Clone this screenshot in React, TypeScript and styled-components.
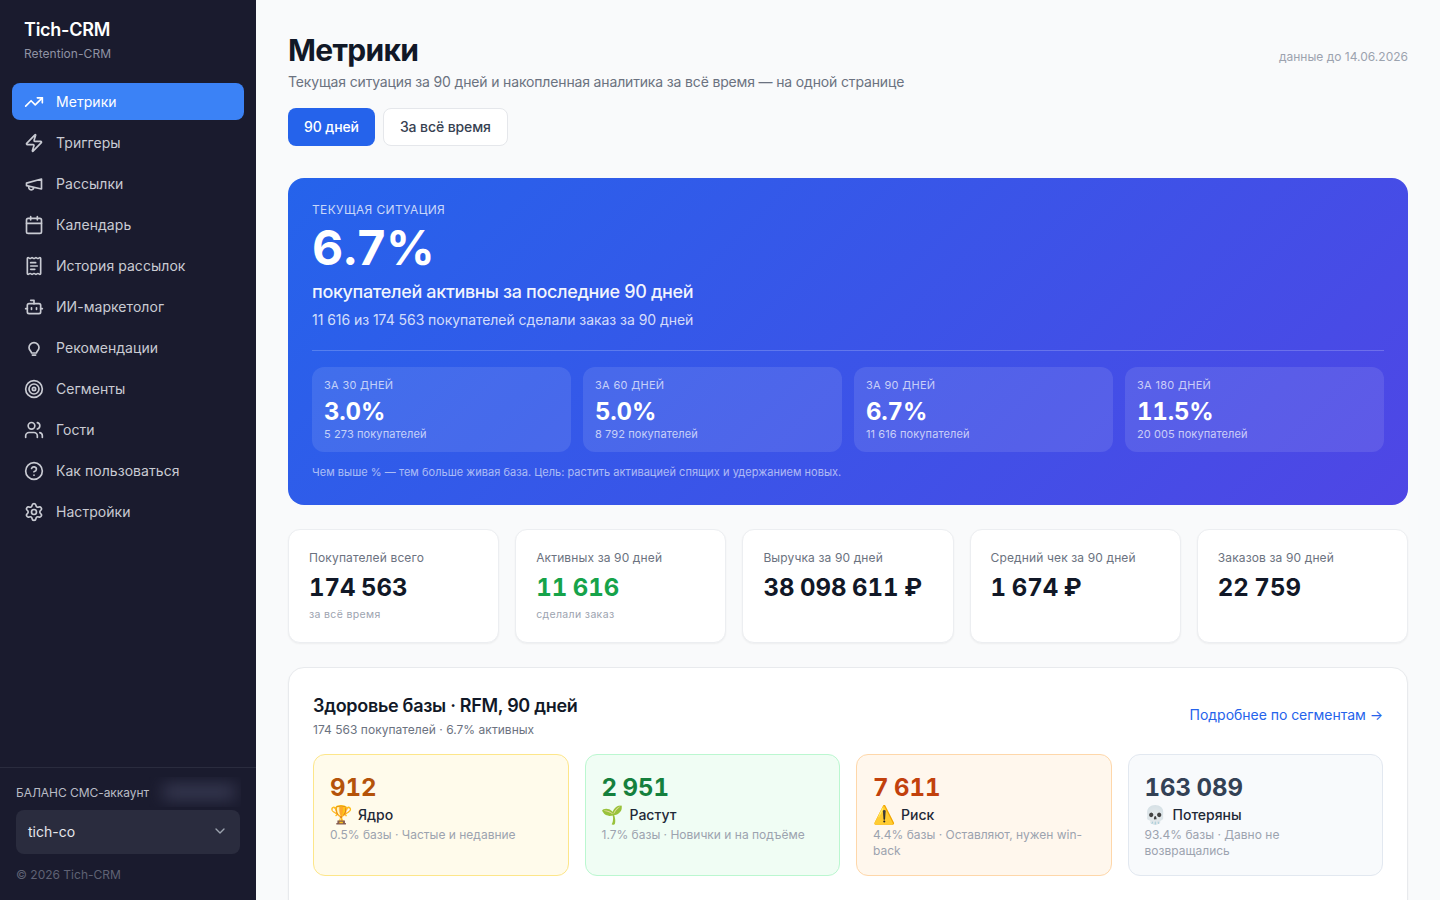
import React from 'react';
import styled, { createGlobalStyle } from 'styled-components';
import {
  TrendingUp, Zap, Calendar, ReceiptText, Bot, Target, Users, CircleHelp, Settings, ChevronDown,
} from 'lucide-react';

const Global = createGlobalStyle`
  html, body { margin: 0; padding: 0; height: 100%; overflow: hidden; }
  body { font-family: Inter, "Noto Sans", sans-serif; background: #f9fafb; color: #111827; }
  * { box-sizing: border-box; }
`;

const Shell = styled.div`display: flex; width: 1440px; height: 900px; overflow: hidden;`;

const Sidebar = styled.aside`
  width: 256px; flex: none; height: 900px; background: #1a1b2e; display: flex; flex-direction: column;
`;
const Brand = styled.div`padding: 20px 24px 0; height: 83px;`;
const BrandName = styled.div`font-size: 18px; font-weight: 600; line-height: 20px; color: #fff; letter-spacing: -0.25px;`;
const BrandSub = styled.div`font-size: 12px; line-height: 16px; color: #8f92a3; margin-top: 6px; letter-spacing: 0.05px;`;
const Nav = styled.nav`display: flex; flex-direction: column; gap: 4px; padding: 0 12px; flex: 1;`;
const NavItem = styled.div<{ $active?: boolean }>`
  height: 37px; display: flex; align-items: center; gap: 12px; padding: 0 12px; border-radius: 8px;
  font-size: 14px; font-weight: 400; letter-spacing: 0.05px; color: ${p => (p.$active ? '#fff' : '#c9cbd3')};
  background: ${p => (p.$active ? '#3b82f6' : 'transparent')};
  svg { width: 20px; height: 20px; flex: none; }
`;
const Foot = styled.div`border-top: 1px solid #2a2c3e; padding: 11px 16px 0; height: 133px;`;
const BalanceRow = styled.div`display: flex; align-items: center; height: 26px; font-size: 12px; color: #b9bbc5; white-space: nowrap; letter-spacing: -0.05px;`;
const Blurred = styled.span`
  display: block; width: 92px; height: 30px; flex: none; position: relative; overflow: hidden;
  &::after { content: ''; position: absolute; left: 14px; top: 8px; width: 72px; height: 14px; background: #3a3c55; filter: blur(8px); }
`;
const Select = styled.div`
  margin-top: 5px; height: 44px; background: #2a2c3e; border-radius: 8px; padding: 0 12px 2px; display: flex;
  align-items: center; justify-content: space-between; color: #e5e7eb; font-size: 14px;
  svg { width: 16px; height: 16px; color: #9ca3af; }
`;
const Copy = styled.div`margin-top: 13px; font-size: 12px; line-height: 16px; color: #5f6274;`;

const Main = styled.main`flex: 1; padding: 32px 32px 0; min-width: 0; overflow: hidden; display: flex; flex-direction: column;`;
const Head = styled.header`display: flex; justify-content: space-between; align-items: flex-start;`;
const Title = styled.h1`margin: 0; font-size: 30px; line-height: 36px; font-weight: 700; color: #111827; letter-spacing: -0.7px;`;
const Sub = styled.p`margin: 4px 0 0; font-size: 14px; line-height: 20px; color: #6b7280; letter-spacing: -0.155px;`;
const DateNote = styled.div`margin-top: 17px; font-size: 12px; line-height: 16px; color: #9ca3af; letter-spacing: 0.01px;`;
const Tabs = styled.div`display: flex; gap: 8px; margin-top: 16px;`;
const Tab = styled.button<{ $active?: boolean }>`
  height: 38px; padding: 0 16px 2px; border-radius: 8px; font: 500 14px Inter, sans-serif; letter-spacing: -0.1px;
  border: ${p => (p.$active ? '0' : '1px solid #e5e7eb')};
  background: ${p => (p.$active ? '#2563eb' : '#fff')}; color: ${p => (p.$active ? '#fff' : '#374151')};
`;
const Hero = styled.section`
  margin-top: 32px; height: 327px; border-radius: 16px; padding: 24px; color: #fff;
  background: linear-gradient(135deg, #2563eb, #4f46e5); display: flex; flex-direction: column; flex: none;
`;
const HeroEyebrow = styled.div`font-size: 12px; line-height: 16px; letter-spacing: 0.35px; color: rgba(255,255,255,0.75);`;
const HeroValue = styled.div`font-size: 48px; line-height: 48px; font-weight: 700; margin-top: 6px; letter-spacing: 0.5px;`;
const HeroLabel = styled.div`font-size: 18px; line-height: 28px; font-weight: 500; margin-top: 6px; color: rgba(255,255,255,0.95); letter-spacing: -0.35px;`;
const HeroNote = styled.div`font-size: 14px; line-height: 20px; margin-top: 4px; color: rgba(255,255,255,0.8); letter-spacing: -0.05px;`;
const HeroRule = styled.hr`width: 100%; border: 0; border-top: 1px solid rgba(255,255,255,0.2); margin: 20px 0 16px;`;
const PeriodGrid = styled.div`display: grid; grid-template-columns: repeat(4, 1fr); gap: 12px;`;
const Period = styled.div`height: 85px; border-radius: 12px; padding: 12px; background: rgba(255,255,255,0.1);`;
const PeriodLabel = styled.div`font-size: 11px; line-height: 12px; letter-spacing: 0.3px; color: rgba(255,255,255,0.7);`;
const PeriodValue = styled.div`font-size: 24px; line-height: 28px; font-weight: 700; margin-top: 7px; font-variant-numeric: tabular-nums; letter-spacing: -0.2px;`;
const PeriodSub = styled.div`font-size: 11px; line-height: 14px; color: rgba(255,255,255,0.7); margin-top: 1px; letter-spacing: 0.1px;`;
const HeroFoot = styled.div`font-size: 11px; line-height: 16px; letter-spacing: 0.03px; color: rgba(255,255,255,0.6); margin-top: 12px;`;

const Stats = styled.section`display: grid; grid-template-columns: repeat(5, 1fr); gap: 16px; margin-top: 24px; flex: none;`;
const Stat = styled.div`height: 114px; background: #fff; border: 1px solid #eceef1; border-radius: 12px; padding: 20px; box-shadow: 0 1px 2px rgba(0,0,0,0.05);`;
const StatLabel = styled.div`font-size: 12px; line-height: 16px; color: #6b7280; letter-spacing: 0.13px;`;
const StatValue = styled.div<{ $green?: boolean }>`font-size: 24px; line-height: 32px; font-weight: 700; margin-top: 6px; font-variant-numeric: tabular-nums; word-spacing: -0.9px; color: ${p => (p.$green ? '#16a34a' : '#111827')};`;
const StatSub = styled.div`font-size: 10.5px; line-height: 16px; letter-spacing: 0.35px; color: #9ca3af; margin-top: 3px;`;

const Panel = styled.section`margin-top: 24px; background: #fff; border: 1px solid #e8eaed; border-radius: 16px; padding: 24px; height: 300px; flex: none; box-shadow: 0 1px 2px rgba(0,0,0,0.05);`;
const PanelHead = styled.div`display: flex; justify-content: space-between; align-items: center;`;
const PanelTitle = styled.h2`margin: 0; font-size: 18px; line-height: 28px; font-weight: 600; color: #111827; letter-spacing: -0.3px;`;
const PanelSub = styled.div`font-size: 12px; line-height: 16px; color: #6b7280; margin-top: 2px; letter-spacing: 0.03px;`;
const PanelLink = styled.a`font-size: 14px; color: #2563eb; letter-spacing: -0.03px; margin-bottom: 2px;`;
const Segments = styled.div`display: grid; grid-template-columns: repeat(4, 1fr); gap: 16px; margin-top: 16px;`;
const Segment = styled.div<{ $bg: string; $border: string }>`
  height: 122px; border-radius: 12px; padding: 16px; background: ${p => p.$bg}; border: 1px solid ${p => p.$border};
`;
const SegValue = styled.div<{ $c: string }>`font-size: 24px; line-height: 32px; font-weight: 700; margin-top: 1px; font-variant-numeric: tabular-nums; word-spacing: -0.9px; color: ${p => p.$c};`;
const SegName = styled.div`font-size: 14px; line-height: 20px; font-weight: 500; color: #1f2937; display: flex; gap: 8px; align-items: center; margin-top: 1px;`;
const Emoji = styled.span`font-size: 18px; line-height: 20px; width: 20px; font-family: "Noto Color Emoji", "Apple Color Emoji", sans-serif;`;
const SegDesc = styled.div`font-size: 12px; line-height: 16px; color: #9ca3af; margin-top: 2px;`;

const BulbIcon = () => (
  <svg viewBox="0 0 24 24" fill="none" stroke="currentColor" strokeWidth="2" strokeLinecap="round" strokeLinejoin="round">
    <path d="M15 18c.1-1.2.7-2 1.500-2.900 1-1 1.500-2.200 1.500-3.600a6 6 0 0 0-12 0c0 1.100.2 2.300 1.500 3.600.8.900 1.400 1.700 1.500 2.900z" />
    <path d="M10 20.500h4" />
  </svg>
);

const MegaphoneIcon = () => (
  <svg viewBox="0 0 24 24" fill="none" stroke="currentColor" strokeWidth="2" strokeLinecap="round" strokeLinejoin="round">
    <path d="m3 11 18-5v12L3 14v-3z" />
    <path d="M11.6 16.800a3 3 0 1 1-5.800-1.600" />
  </svg>
);

const nav: [React.ComponentType, string][] = [
  [TrendingUp, 'Метрики'], [Zap, 'Триггеры'], [MegaphoneIcon, 'Рассылки'], [Calendar, 'Календарь'],
  [ReceiptText, 'История рассылок'], [Bot, 'ИИ-маркетолог'], [BulbIcon, 'Рекомендации'], [Target, 'Сегменты'],
  [Users, 'Гости'], [CircleHelp, 'Как пользоваться'], [Settings, 'Настройки'],
];
const periods = [
  ['ЗА 30 ДНЕЙ', '3.0%', '5 273 покупателей'], ['ЗА 60 ДНЕЙ', '5.0%', '8 792 покупателей'],
  ['ЗА 90 ДНЕЙ', '6.7%', '11 616 покупателей'], ['ЗА 180 ДНЕЙ', '11.5%', '20 005 покупателей'],
];
const stats = [
  ['Покупателей всего', '174 563', 'за всё время'], ['Активных за 90 дней', '11 616', 'сделали заказ', true],
  ['Выручка за 90 дней', '38 098 611 ₽', ''], ['Средний чек за 90 дней', '1 674 ₽', ''], ['Заказов за 90 дней', '22 759', ''],
] as const;
const segs = [
  ['912', '🏆', 'Ядро', '0.5% базы · Частые и недавние', '#fffbeb', '#fde68a', '#b45309'],
  ['2 951', '🌱', 'Растут', '1.7% базы · Новички и на подъёме', '#f0fdf4', '#bbf7d0', '#15803d'],
  ['7 611', '⚠️', 'Риск', '4.4% базы · Оставляют, нужен win-back', '#fff7ed', '#fed7aa', '#c2410c'],
  ['163 089', '💀', 'Потеряны', '93.4% базы · Давно не возвращались', '#f8fafc', '#e2e8f0', '#334155'],
];

export default function App() {
  return (
    <Shell>
      <Global />
      <Sidebar>
        <Brand><BrandName>Tich-CRM</BrandName><BrandSub>Retention-CRM</BrandSub></Brand>
        <Nav>
          {nav.map(([I, t], i) => <NavItem key={t} $active={i === 0}><I />{t}</NavItem>)}
        </Nav>
        <Foot>
          <BalanceRow>БАЛАНС СМС-аккаунт<Blurred /></BalanceRow>
          <Select>tich-co<ChevronDown /></Select>
          <Copy>© 2026 Tich-CRM</Copy>
        </Foot>
      </Sidebar>
      <Main>
        <Head>
          <div>
            <Title>Метрики</Title>
            <Sub>Текущая ситуация за 90 дней и накопленная аналитика за всё время — на одной странице</Sub>
          </div>
          <DateNote>данные до 14.06.2026</DateNote>
        </Head>
        <Tabs><Tab $active>90 дней</Tab><Tab>За всё время</Tab></Tabs>
        <Hero>
          <HeroEyebrow>ТЕКУЩАЯ СИТУАЦИЯ</HeroEyebrow>
          <HeroValue>6.7%</HeroValue>
          <HeroLabel>покупателей активны за последние 90 дней</HeroLabel>
          <HeroNote>11 616 из 174 563 покупателей сделали заказ за 90 дней</HeroNote>
          <HeroRule />
          <PeriodGrid>
            {periods.map(p => <Period key={p[0]}><PeriodLabel>{p[0]}</PeriodLabel><PeriodValue>{p[1]}</PeriodValue><PeriodSub>{p[2]}</PeriodSub></Period>)}
          </PeriodGrid>
          <HeroFoot>Чем выше % — тем больше живая база. Цель: растить активацией спящих и удержанием новых.</HeroFoot>
        </Hero>
        <Stats>
          {stats.map(s => <Stat key={s[0]}><StatLabel>{s[0]}</StatLabel><StatValue $green={s.length > 3}>{s[1]}</StatValue>{s[2] && <StatSub>{s[2]}</StatSub>}</Stat>)}
        </Stats>
        <Panel>
          <PanelHead>
            <div><PanelTitle>Здоровье базы · RFM, 90 дней</PanelTitle><PanelSub>174 563 покупателей · 6.7% активных</PanelSub></div>
            <PanelLink>Подробнее по сегментам →</PanelLink>
          </PanelHead>
          <Segments>
            {segs.map(s => (
              <Segment key={s[2]} $bg={s[4]} $border={s[5]}>
                <SegValue $c={s[6]}>{s[0]}</SegValue>
                <SegName><Emoji>{s[1]}</Emoji>{s[2]}</SegName>
                <SegDesc>{s[3]}</SegDesc>
              </Segment>
            ))}
          </Segments>
        </Panel>
      </Main>
    </Shell>
  );
}
